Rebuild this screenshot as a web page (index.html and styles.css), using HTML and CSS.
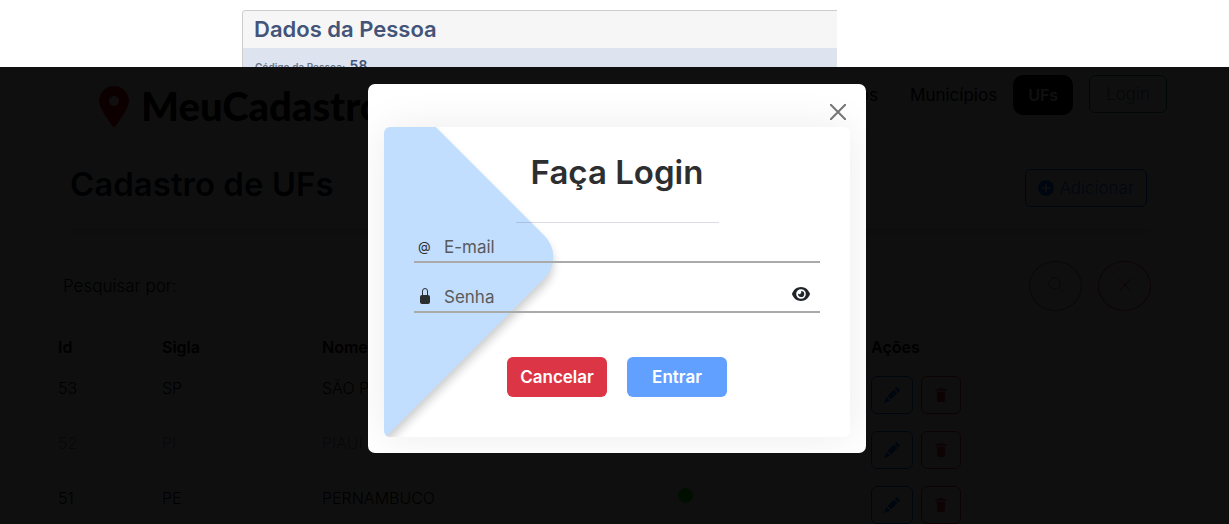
FILE: index.html
```html
<!DOCTYPE html>
<html lang="pt-BR">
<head>
<meta charset="utf-8">
<meta name="viewport" content="width=device-width, initial-scale=1">
<title>MeuCadastro</title>
<link rel="stylesheet" href="styles.css">
</head>
<body>
<svg class="sprite" aria-hidden="true">
  <symbol id="pencil" viewBox="0 0 16 16"><path d="M12.9.2a.5.5 0 0 0-.8 0l-1.6 1.6 3.7 3.7 1.6-1.6a.5.5 0 0 0 0-.8zM13.500 6.200 9.800 2.500 3.300 9h.2a.5.5 0 0 1 .5.5v.5h.5a.5.5 0 0 1 .5.5v.5h.5a.5.5 0 0 1 .5.5v.5h.5a.5.5 0 0 1 .5.5v.2zM6 13.700a.5.5 0 0 1 0-.2V13h-.5a.5.5 0 0 1-.5-.5V12h-.5a.5.5 0 0 1-.5-.5V11h-.5a.5.5 0 0 1-.5-.5V10h-.5l-.2.100-.1.200-2 5a.5.5 0 0 0 .6.600l5-2z"/></symbol>
  <symbol id="trash" viewBox="0 0 16 16"><path d="M2.500 1a1 1 0 0 0-1 1v1h13V2a1 1 0 0 0-1-1H10.500a1 1 0 0 0-1-1h-3a1 1 0 0 0-1 1zM3 4h10l-.6 10.500a1.500 1.500 0 0 1-1.500 1.500H5.100a1.500 1.500 0 0 1-1.500-1.500z"/></symbol>
</svg>

<section class="preview">
  <div class="preview-card">
    <h2 class="preview-title">Dados da Pessoa</h2>
    <p class="preview-line"><span class="preview-label">Código da Pessoa:</span> <strong class="preview-value">58</strong></p>
  </div>
</section>

<div class="stage">
  <div class="app">
    <header class="topbar">
      <a class="brand" href="#">
        <svg class="brand-pin" viewBox="0 0 30 41" aria-hidden="true"><path fill-rule="evenodd" d="M15 0A15 15 0 0 0 0 15c0 7 9 19 13.500 25a2 2 0 0 0 3 0C21 34 30 22 30 15A15 15 0 0 0 15 0zm0 10a5 5 0 1 1 0 10 5 5 0 0 1 0-10z"/></svg>
        <span>MeuCadastro</span>
      </a>
      <nav class="menu">
        <a class="menu-link" href="#">Bairros</a>
        <a class="menu-link" href="#">Municípios</a>
        <a class="menu-link active" href="#">UFs</a>
        <button class="btn btn-login" type="button">Login</button>
      </nav>
    </header>

    <div class="title-wrap">
      <div class="title-box">
        <h1 class="title">Cadastro de UFs</h1>
        <button class="btn btn-primary" type="button">
          <svg class="icon" viewBox="0 0 16 16" aria-hidden="true"><path fill-rule="evenodd" d="M16 8A8 8 0 1 1 0 8a8 8 0 0 1 16 0zM8.700 4.500a.7.7 0 0 0-1.400 0v2.800H4.500a.7.7 0 0 0 0 1.400h2.800v2.800a.7.7 0 0 0 1.400 0V8.700h2.800a.7.7 0 0 0 0-1.400H8.700z"/></svg>
          Adicionar
        </button>
      </div>
    </div>

    <div class="search">
      <span class="search-label">Pesquisar por:</span>
      <button class="round blue" type="button" aria-label="Pesquisar"><svg class="icon line" viewBox="0 0 16 16"><circle cx="6.500" cy="6.500" r="5.700"/><path d="m10.700 10.700 4.600 4.600"/></svg></button>
      <button class="round red" type="button" aria-label="Limpar"><svg class="icon line" viewBox="0 0 16 16"><path d="m2 1.500 12 13M14 1.500 2 14.500"/></svg></button>
    </div>

    <table class="list">
      <colgroup><col class="c-id"><col class="c-sigla"><col class="c-nome"><col class="c-status"><col></colgroup>
      <thead><tr><th>Id</th><th>Sigla</th><th>Nome</th><th></th><th>Ações</th></tr></thead>
      <tbody>
        <tr><td>53</td><td>SP</td><td>SÃO PAULO</td><td></td><td><div class="actions"><button class="btn btn-primary" type="button" aria-label="Editar"><svg class="icon"><use href="#pencil"/></svg></button><button class="btn btn-danger" type="button" aria-label="Excluir"><svg class="icon small"><use href="#trash"/></svg></button></div></td></tr>
        <tr class="inactive"><td>52</td><td>PI</td><td>PIAUI</td><td></td><td><div class="actions"><button class="btn btn-primary" type="button" aria-label="Editar"><svg class="icon"><use href="#pencil"/></svg></button><button class="btn btn-danger" type="button" aria-label="Excluir"><svg class="icon small"><use href="#trash"/></svg></button></div></td></tr>
        <tr><td>51</td><td>PE</td><td>PERNAMBUCO</td><td><span class="dot"></span></td><td><div class="actions"><button class="btn btn-primary" type="button" aria-label="Editar"><svg class="icon"><use href="#pencil"/></svg></button><button class="btn btn-danger" type="button" aria-label="Excluir"><svg class="icon small"><use href="#trash"/></svg></button></div></td></tr>
      </tbody>
    </table>
  </div>

  <div class="backdrop">
    <div class="modal" role="dialog" aria-modal="true" aria-labelledby="login-title">
      <div class="modal-head">
        <button class="close" type="button" aria-label="Fechar"><svg viewBox="0 0 16 16"><path d="m.8.8 14.400 14.400M15.200.8.8 15.200"/></svg></button>
      </div>
      <form class="panel">
        <div class="shape"></div>
        <div class="panel-content">
          <h2 class="login-title" id="login-title">Faça Login</h2>
          <hr class="rule">
          <div class="field">
            <label class="field-icon at" for="email">@</label>
            <input id="email" type="email" placeholder="E-mail" aria-label="E-mail">
          </div>
          <div class="field">
            <label class="field-icon" for="senha"><svg class="lock" viewBox="0 0 10 16" aria-hidden="true"><path d="M2.500 8V3a2.500 2.500 0 0 1 5 0v5" fill="none" stroke="currentColor"/><rect y="7" width="10" height="9" rx="2"/></svg></label>
            <input id="senha" type="password" placeholder="Senha" aria-label="Senha">
            <button class="eye" type="button" aria-label="Mostrar senha"><svg viewBox="0 0 18 14"><path fill-rule="evenodd" d="M9 0C4.800 0 1.600 2.800.1 6.500a1.300 1.300 0 0 0 0 1C1.600 11.200 4.800 14 9 14s7.400-2.800 8.900-6.500a1.300 1.300 0 0 0 0-1C16.400 2.800 13.200 0 9 0zm0 2.200a4.800 4.800 0 1 1 0 9.600 4.800 4.800 0 0 1 0-9.600z"/><path d="M9 3.900a2 2 0 0 1-2.900 2.700A3.100 3.100 0 1 0 9 3.900z"/></svg></button>
          </div>
          <div class="form-actions">
            <button class="action cancel" type="button">Cancelar</button>
            <button class="action enter" type="submit">Entrar</button>
          </div>
        </div>
      </form>
    </div>
  </div>
</div>
</body>
</html>
```
FILE: styles.css
```css
* { box-sizing: border-box; }

body {
  margin: 0;
  height: 100vh;
  display: flex;
  flex-direction: column;
  overflow: hidden;
  background: #fff;
  color: #212529;
  font: 300 16px/24px Inter, "Open Sans", sans-serif;
}

button, input { font: inherit; color: inherit; }
button { cursor: pointer; }
h1, h2, p { margin: 0; }
a { color: inherit; text-decoration: none; }
.sprite { display: none; }

/* Preview strip */
.preview {
  flex: 0 0 67px;
  padding: 10px 32px 0 242px;
  overflow: hidden;
}
.preview-card {
  max-width: 595px;
  border: 1px solid #ccc;
  border-right: 0;
  border-radius: 4px 0 0 0;
  background: #dde4f0;
  color: #435478;
  overflow: hidden;
}
.preview-title {
  padding: 0 11px;
  background: #f6f6f6;
  font-size: 22px;
  line-height: 37px;
  font-weight: 600;
}
.preview-line { padding: 5px 12px; }
.preview-label { font-size: 10px; font-weight: 600; color: #6a7486; }
.preview-value { font-size: 14px; font-weight: 600; }

/* Application */
.stage {
  position: relative;
  flex: 1;
  overflow: hidden;
}
.app { padding: 0 62px 0 50px; color: #000; }

.topbar {
  display: flex;
  justify-content: space-between;
  align-items: flex-start;
  height: 73px;
  padding: 8px 0 0 49px;
  border-bottom: 1px solid #dee2e6;
}
.brand {
  display: flex;
  align-items: center;
  gap: 12px;
  padding-top: 11px;
  font: 900 40px/41px Lato, sans-serif;
}
.brand-pin { width: 30px; height: 41px; fill: #dc0014; }
.menu { display: flex; gap: 16px; font-size: 17px; font-weight: 400; }
.menu-link { padding: 8px 0; }
.menu-link:first-child { padding-right: 16px; }
.menu-link.active {
  padding: 8px 15px;
  border-radius: 10px;
  background: #000;
  color: #fff;
  font-size: 16px;
  font-weight: 600;
}

.btn {
  height: 38px;
  padding: 0 12px;
  border: 1px solid;
  border-radius: 6px;
  background: none;
  display: inline-flex;
  align-items: center;
  gap: 5px;
}
.btn-login { padding: 0 16px; border-color: #198754; color: #6c757d; font-weight: 300; }
.btn-primary { color: #0d6efd; }
.btn-danger { color: #dc3545; }
.icon { width: 16px; height: 16px; fill: currentColor; }
.icon.small { width: 14px; }
.icon.line { fill: none; stroke: currentColor; stroke-width: 1; }

.title-wrap {
  height: 105px;
  padding: 12px 10px 0 12px;
  border-bottom: 1px solid #dee2e6;
}
.title-box {
  display: flex;
  justify-content: space-between;
  align-items: flex-start;
  height: 76px;
  padding: 17px 10px 0 8px;
  border-radius: 6px;
  box-shadow: 0 10px 12px -6px rgba(0, 0, 0, .2);
}
.title { font-size: 33px; line-height: 30px; font-weight: 600; color: #0b1a2c; }
.title-box .btn { font-size: 17px; }

.search {
  display: flex;
  align-items: center;
  gap: 16px;
  padding: 16px 16px 16px 13px;
}
.search-label { flex: 1; font-size: 17px; }
.round {
  width: 53px;
  height: 50px;
  padding: 0 0 2px;
  display: flex;
  align-items: center;
  justify-content: center;
  border: 1px solid;
  border-radius: 50%;
  background: none;
}
.round.blue { color: #5a7a9a; }
.round.red { color: #dc3545; }

.list {
  width: 100%;
  table-layout: fixed;
  border-collapse: collapse;
}
.list th, .list td {
  padding: 8px;
  border-bottom: 1px solid #eee;
  text-align: left;
  vertical-align: top;
}
.list th { font-weight: 600; }
.inactive td { color: #888; }
.c-id { width: 104px; }
.c-sigla { width: 160px; }
.c-nome { width: 356px; }
.c-status { width: 193px; }
.actions { display: flex; gap: 8px; }
.dot {
  display: block;
  width: 15px;
  height: 15px;
  margin-top: 2px;
  border-radius: 50%;
  background: #00ff00;
}

/* Login modal */
.backdrop {
  position: absolute;
  inset: 0;
  display: flex;
  justify-content: center;
  align-items: flex-start;
  padding: 17px 0 0 5px;
  background: rgba(0, 0, 0, .94);
}
.modal {
  width: 498px;
  padding: 16px;
  border-radius: 7px;
  background: #fff;
  overflow: hidden;
}
.modal-head {
  display: flex;
  justify-content: flex-end;
  padding: 4px 4px 7px;
}
.close {
  position: relative;
  z-index: 1;
  display: block;
  width: 16px;
  height: 16px;
  padding: 0;
  border: 0;
  background: none;
}
.close svg {
  display: block;
  width: 100%;
  height: 100%;
  stroke: #757575;
  stroke-width: 2;
  stroke-linecap: round;
}
.panel {
  position: relative;
  border-radius: 6px;
  background: #fff;
  box-shadow: 0 0 40px rgba(0, 0, 0, .08);
  overflow: hidden;
}
.shape {
  position: absolute;
  left: -446px;
  top: -130px;
  width: 520px;
  height: 520px;
  border-radius: 30px;
  background: #c1deff;
  box-shadow: 5px 5px 10px rgba(0, 0, 0, .2);
  transform: rotate(45deg);
}
.panel-content { position: relative; padding: 20px 30px 40px; }
.login-title {
  color: #2d2e30;
  font-size: 33px;
  line-height: 50px;
  font-weight: 600;
  text-align: center;
}
.rule {
  width: 50%;
  margin: 25px auto 8px;
  border: 0;
  border-top: 1px solid rgba(60, 60, 110, .18);
}
.field {
  display: flex;
  align-items: center;
  height: 32px;
  margin-bottom: 18px;
  border-bottom: 2px solid #aaa;
}
.field-icon {
  width: 30px;
  padding-left: 6px;
  color: #2d2e30;
  line-height: 16px;
}
.field-icon.at { padding-left: 4px; font-size: 13px; font-weight: 400; }
.lock { display: block; width: 10px; height: 16px; fill: currentColor; }
.field input {
  flex: 1;
  min-width: 0;
  padding: 2px 0 0;
  border: 0;
  outline: 0;
  background: none;
  font-size: 17px;
  font-weight: 400;
}
.field input::placeholder { color: #5a5a5a; opacity: 1; }
.eye {
  width: 18px;
  height: 14px;
  margin: 0 10px 4px 0;
  padding: 0;
  border: 0;
  background: none;
}
.eye svg { display: block; width: 100%; height: 100%; fill: #212529; }
.form-actions {
  display: flex;
  justify-content: center;
  gap: 20px;
  padding-top: 26px;
}
.action {
  width: 100px;
  height: 40px;
  padding: 0;
  border: 0;
  border-radius: 6px;
  color: #fff;
  font-size: 17px;
  font-weight: 600;
}
.cancel { background: #dc3545; }
.enter { background: #61a0ff; }
```
